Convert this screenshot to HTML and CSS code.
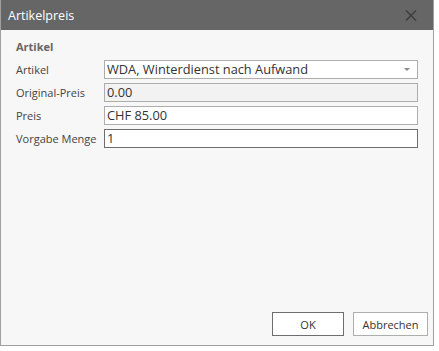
FILE: index.html
```html
<!DOCTYPE html>
<html lang="de">
<head>
  <meta charset="UTF-8">
  <title>Artikelpreis</title>
  <link rel="stylesheet" href="styles.css">
</head>
<body>
  <div class="dialog">
    <div class="titlebar">
      <span class="title">Artikelpreis</span>
      <svg class="close" width="12" height="11" viewBox="0 0 12 11">
        <path d="M1 0.5 L11 10.5 M11 0.5 L1 10.5" stroke="#3c3c3c" stroke-width="1.3" fill="none"/>
      </svg>
    </div>
    <div class="content">
      <div class="group-title">Artikel</div>
      <div class="form">
        <label>Artikel</label>
        <div class="field combo">
          <span>WDA, Winterdienst nach Aufwand</span>
          <svg width="6" height="4" viewBox="0 0 6 4"><path d="M0 0 H6 L3 3 Z" fill="#8a8a8a"/></svg>
        </div>
        <label>Original-Preis</label>
        <div class="field readonly">0.00</div>
        <label>Preis</label>
        <div class="field">CHF 85.00</div>
        <label>Vorgabe Menge</label>
        <div class="field focused">1</div>
      </div>
    </div>
    <div class="footer">
      <button class="btn default">OK</button>
      <button class="btn">Abbrechen</button>
    </div>
  </div>
</body>
</html>
```

FILE: styles.css
```css
body {
  margin: 0;
  background: #fff;
  font-family: "Open Sans", "Noto Sans", sans-serif;
  color: #3b3b3b;
}
.dialog {
  width: 432px;
  height: 345px;
  border: 1px solid #a0a0a0;
  border-top: none;
  background: #f7f7f7;
  display: flex;
  flex-direction: column;
}
.titlebar {
  height: 30px;
  background: #666;
  display: flex;
  align-items: center;
  justify-content: space-between;
  padding: 0 16px 0 7px;
}
.title {
  color: #fff;
  font-size: 12.5px;
}
.close {
  margin-top: 1px;
}
.content {
  flex: 1;
  padding: 10px 16px 0 15px;
}
.group-title {
  font-size: 11px;
  font-weight: bold;
  color: #666;
  height: 20px;
  line-height: 14px;
}
.form {
  display: grid;
  grid-template-columns: 88px 314px;
  row-gap: 4px;
  align-items: center;
  font-size: 11px;
}
.form label {
  color: #444;
}
.field {
  height: 19px;
  box-sizing: border-box;
  border: 1px solid #adadad;
  background: #fff;
  padding: 0 2px;
  font-size: 12.8px;
  line-height: 17px;
  color: #333;
}
.combo {
  display: flex;
  justify-content: space-between;
  align-items: center;
  padding-right: 7px;
}
.readonly {
  background: #f2f2f2;
}
.focused {
  border-color: #6e6e6e;
}
.footer {
  display: flex;
  justify-content: flex-end;
  gap: 9px;
  padding: 0 5px 9px 0;
}
.btn {
  height: 24px;
  width: 75px;
  background: #fff;
  border: 1px solid #adadad;
  font-family: inherit;
  font-size: 11px;
  color: #333;
  padding: 0;
}
.btn.default {
  width: 72px;
  border-color: #6e6e6e;
}
```
